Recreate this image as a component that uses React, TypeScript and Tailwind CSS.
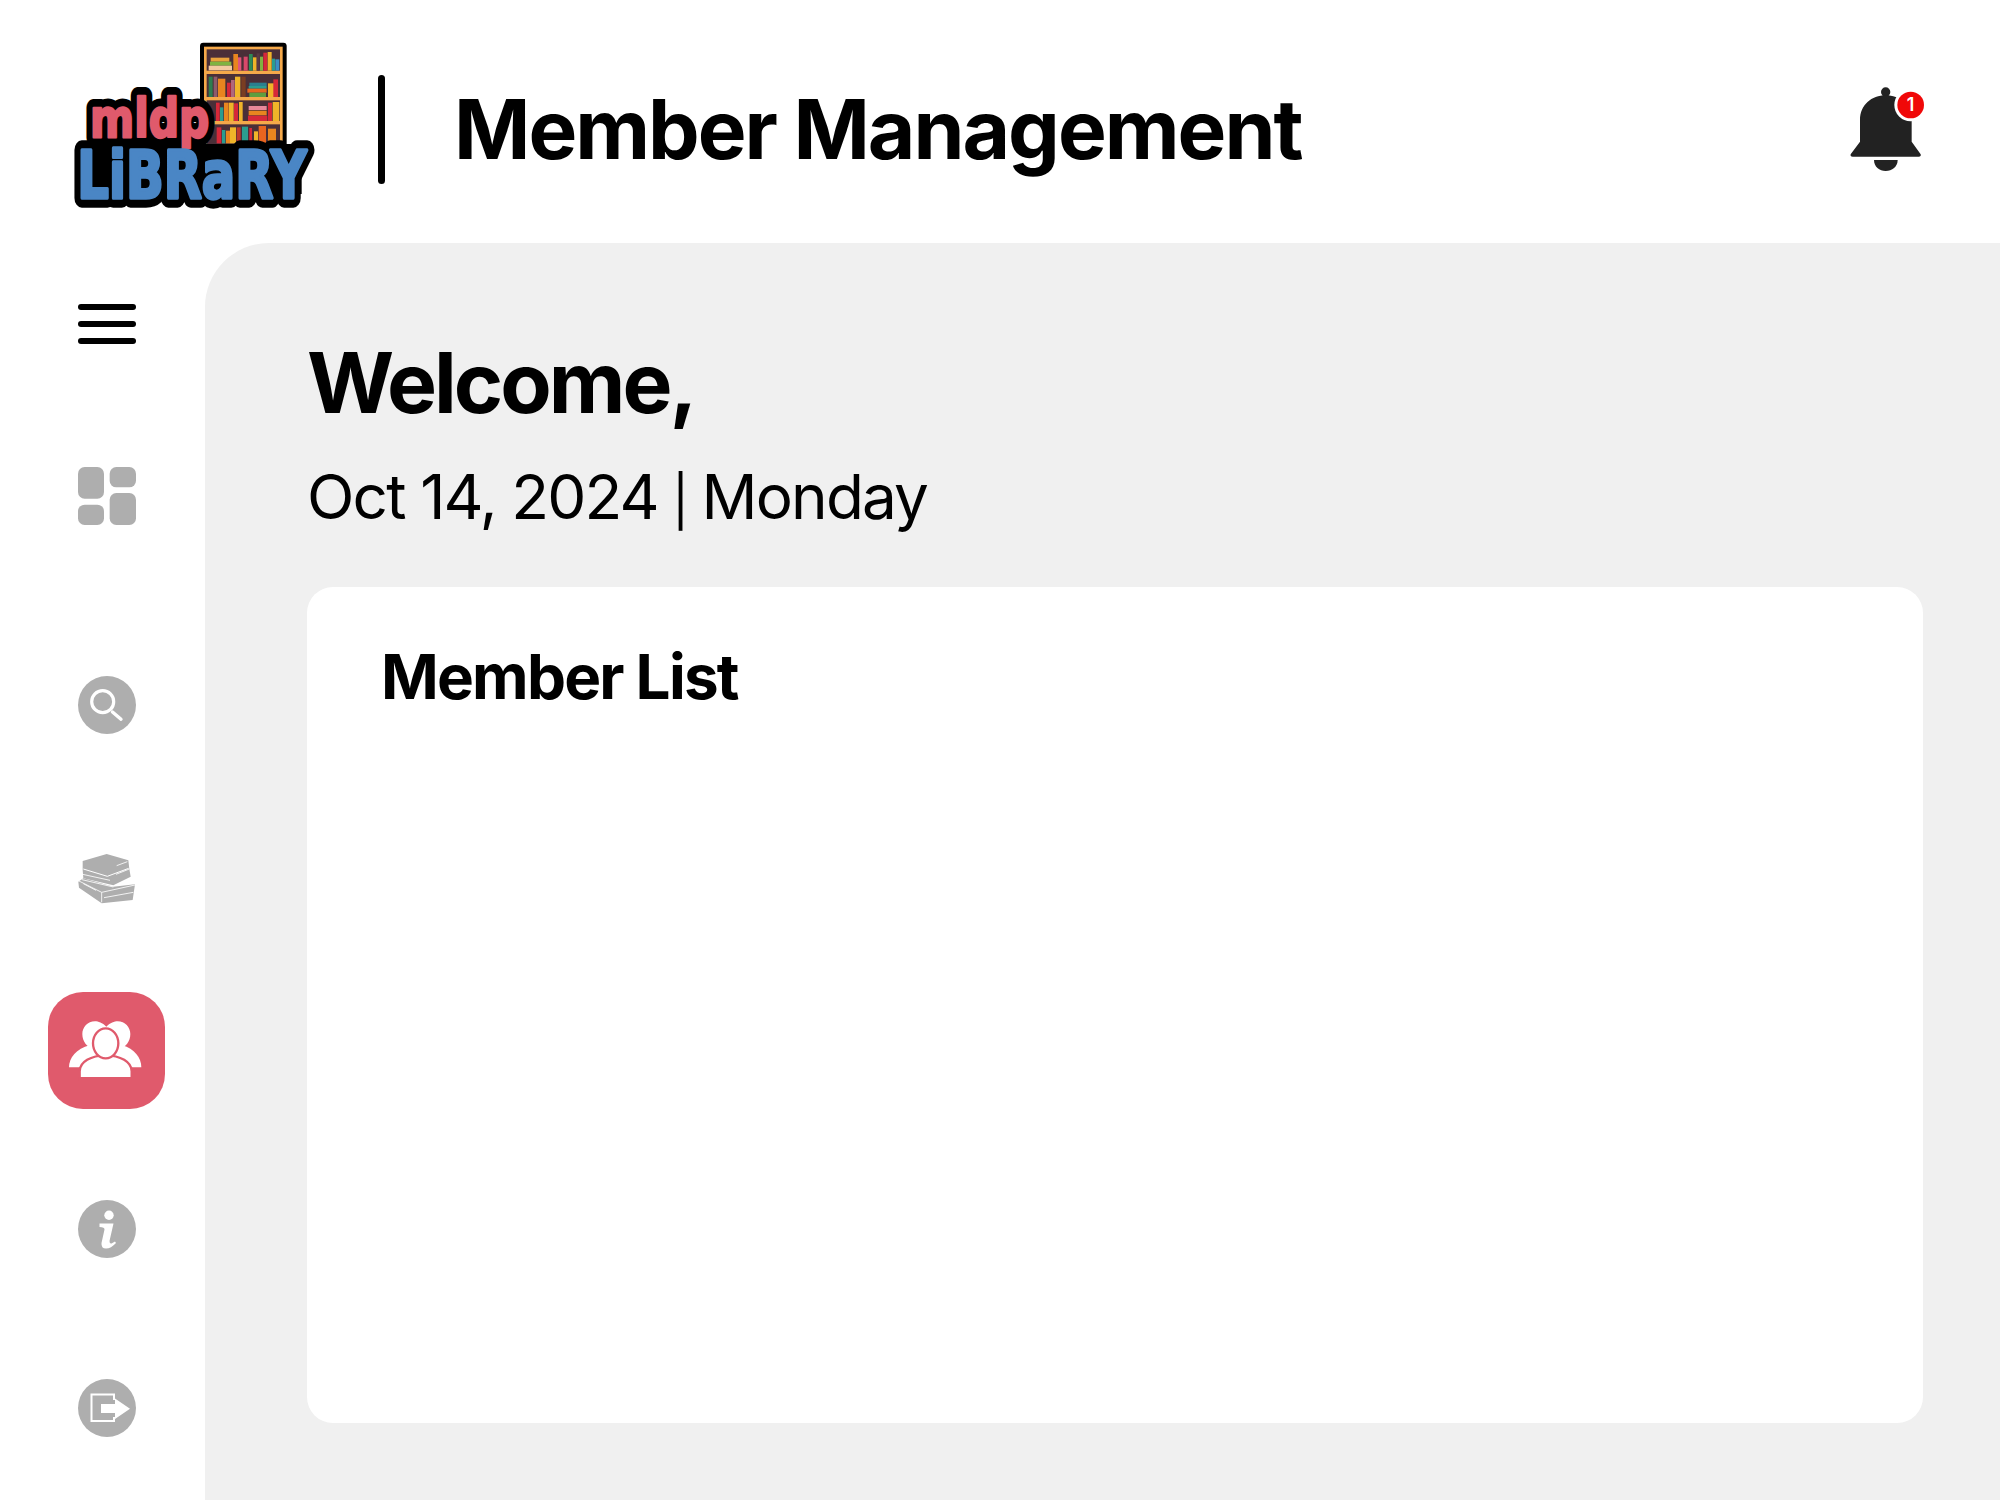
import { ReactNode } from "react";

const fontStack = { fontFamily: "Inter, 'Liberation Sans', sans-serif" };

// [x, y, w, h, colour] in the 3x crop of the logo
const shelfBooks: [number, number, number, number, string][] = [
  [512, 113, 56, 12, "#e8a33d"],
  [510, 125, 64, 12, "#7fb341"],
  [506, 137, 70, 14, "#f3c9a0"],
  [580, 102, 14, 50, "#e8851f"],
  [594, 112, 10, 40, "#e0567a"],
  [611, 110, 12, 42, "#d9486a"],
  [627, 102, 11, 50, "#2e8b57"],
  [639, 112, 11, 40, "#f0b429"],
  [650, 100, 9, 52, "#5a3a44"],
  [660, 110, 9, 42, "#7fb341"],
  [670, 98, 12, 54, "#d62839"],
  [683, 96, 12, 56, "#f0b429"],
  [696, 116, 9, 36, "#2a9d8f"],
  [706, 118, 12, 34, "#3a8fc4"],
  [506, 170, 12, 61, "#2e7d4f"],
  [521, 170, 11, 61, "#8e5a6b"],
  [534, 176, 22, 55, "#e8851f"],
  [561, 188, 11, 43, "#d62839"],
  [573, 180, 11, 51, "#b0677c"],
  [585, 170, 16, 61, "#f0b429"],
  [604, 170, 13, 61, "#7a3d22"],
  [628, 188, 52, 10, "#2a7f8f"],
  [626, 198, 54, 8, "#2a9d8f"],
  [622, 206, 58, 12, "#e8651f"],
  [628, 218, 50, 13, "#5f9e3f"],
  [684, 190, 24, 41, "#f0b429"],
  [700, 178, 14, 53, "#d62839"],
  [528, 248, 11, 55, "#d62839"],
  [540, 262, 10, 41, "#2a9d8f"],
  [552, 248, 14, 55, "#e8851f"],
  [567, 248, 14, 55, "#f0b429"],
  [582, 250, 12, 53, "#d62839"],
  [597, 246, 11, 57, "#f0b429"],
  [626, 258, 54, 12, "#e8889a"],
  [626, 272, 54, 14, "#e8851f"],
  [624, 287, 58, 16, "#d62839"],
  [684, 248, 12, 55, "#d62839"],
  [698, 246, 20, 57, "#f0b429"],
  [530, 322, 14, 48, "#d62839"],
  [546, 330, 10, 40, "#2a9d8f"],
  [558, 332, 12, 38, "#e8851f"],
  [570, 322, 18, 48, "#f0b429"],
  [590, 322, 12, 48, "#c0392b"],
  [606, 320, 18, 50, "#2a9d8f"],
  [628, 324, 8, 46, "#d62839"],
  [642, 334, 12, 36, "#f0b429"],
  [656, 318, 22, 52, "#e8651f"],
  [684, 326, 24, 44, "#e8851f"],
];

function Logo() {
  const mldp = {
    x: 150,
    y: 350,
    fontFamily: "'DejaVu Sans', sans-serif",
    fontWeight: 700,
    fontSize: 162,
    textLength: 358,
    lengthAdjust: "spacingAndGlyphs" as const,
    strokeLinejoin: "round" as const,
  };
  const library = {
    x: 112,
    y: 534,
    fontFamily: "'DejaVu Sans', sans-serif",
    fontWeight: 700,
    fontSize: 195,
    textLength: 688,
    lengthAdjust: "spacingAndGlyphs" as const,
    strokeLinejoin: "round" as const,
  };
  return (
    <svg width="300" height="200" viewBox="0 0 900 600" className="mt-[5px] shrink-0 self-start">
      <rect x="480" y="68" width="260" height="320" rx="10" fill="#000" />
      <rect x="496" y="84" width="228" height="300" fill="#4a2f38" stroke="#f5a94a" strokeWidth="8" />
      <rect x="496" y="152" width="228" height="10" fill="#f5a94a" />
      <rect x="496" y="231" width="228" height="10" fill="#f5a94a" />
      <rect x="496" y="303" width="228" height="10" fill="#f5a94a" />
      {shelfBooks.map(([x, y, w, h, c]) => (
        <rect key={`${x}-${y}`} x={x} y={y} width={w} height={h} fill={c} />
      ))}
      <rect x="125" y="372" width="660" height="150" fill="#000" />
      <text {...mldp} fill="#000" stroke="#000" strokeWidth="54">
        mldp
      </text>
      <text {...library} fill="#000" stroke="#000" strokeWidth="58">
        LiBRaRY
      </text>
      <text {...mldp} fill="#e05a6c" stroke="#e05a6c" strokeWidth="8">
        mldp
      </text>
      <text {...library} fill="#4a86c5" stroke="#4a86c5" strokeWidth="10">
        LiBRaRY
      </text>
    </svg>
  );
}

function Bell() {
  return (
    <svg width="120" height="110" viewBox="0 0 360 330" className="-mt-[8px]">
      <circle cx="197" cy="66" r="14" fill="#222" />
      <path d="M120 150C120 105 155 76 197 76C239 76 275 105 275 150V215L302 253Q304 260 296 260H98Q90 260 92 253L120 215Z" fill="#222" />
      <path d="M162 270H233C233 290 216 303 197 303C178 303 162 290 162 270Z" fill="#222" />
      <circle cx="272" cy="105" r="49" fill="#fff" />
      <circle cx="272" cy="105" r="40" fill="#f00808" />
      <text x="272" y="124" textAnchor="middle" fontFamily="Inter, sans-serif" fontWeight="600" fontSize="54" fill="#fff">
        1
      </text>
    </svg>
  );
}

function MenuIcon() {
  return (
    <div className="flex w-[58px] flex-col gap-[11px]">
      <span className="h-[6px] rounded-full bg-black" />
      <span className="h-[6px] rounded-full bg-black" />
      <span className="h-[6px] rounded-full bg-black" />
    </div>
  );
}

function DashboardIcon() {
  return (
    <svg width="58" height="58" viewBox="0 0 174 174" fill="#aeaeae">
      <rect x="0" y="0" width="78" height="95" rx="20" />
      <rect x="95" y="0" width="79" height="61" rx="20" />
      <rect x="0" y="113" width="78" height="61" rx="20" />
      <rect x="95" y="78" width="79" height="96" rx="20" />
    </svg>
  );
}

function SearchIcon() {
  return (
    <svg width="58" height="58" viewBox="0 0 58 58">
      <circle cx="29" cy="29" r="29" fill="#aeaeae" />
      <circle cx="24.7" cy="25.7" r="11" fill="none" stroke="#fff" strokeWidth="3.2" />
      <path d="M34.5 36L43 43.2" stroke="#fff" strokeWidth="3.4" strokeLinecap="round" />
    </svg>
  );
}

function BooksIcon() {
  return (
    <svg width="75" height="65" viewBox="0 0 225 195" fill="#aeaeae">
      <path d="M38 48L110 27L175 46L178 72L182 95L130 121L40 100L38 75Z" />
      <path d="M25 110L40 100L130 125L195 118L188 165L95 175L27 128Z" />
      <path d="M40 72L112 94L176 70" fill="none" stroke="#fff" strokeWidth="3" />
      <path d="M38 88L120 106M138 88L178 72M140 62L172 50" fill="none" stroke="#fff" strokeWidth="2.5" />
      <path d="M36 104L130 126" fill="none" stroke="#fff" strokeWidth="2.5" />
      <path d="M27 108L95 142L195 120M95 142V172M102 158L190 142M40 116L78 136" fill="none" stroke="#fff" strokeWidth="2.5" />
    </svg>
  );
}

function MembersIcon() {
  return (
    <svg width="95" height="85" viewBox="0 0 285 255">
      <path d="M142 56C130 44 118 40 108 40C86 40 70 58 70 78C70 100 84 118 104 124L180 124C200 118 214 100 214 78C214 58 198 40 176 40C166 40 154 44 142 56Z" fill="#fff" />
      <path d="M30 178C30 150 52 122 92 112L190 112C226 122 247 150 247 178Z" fill="#fff" />
      <path d="M62 212V190C62 162 96 142 140 142C184 142 218 162 218 190V212Z" fill="#fff" stroke="#e05a6c" strokeWidth="7" />
      <ellipse cx="140" cy="106" rx="38" ry="45" fill="#fff" stroke="#e05a6c" strokeWidth="7" />
      <rect x="58" y="207" width="164" height="12" fill="#e05a6c" />
    </svg>
  );
}

function InfoIcon() {
  return (
    <svg width="58" height="58" viewBox="0 0 58 58">
      <circle cx="29" cy="29" r="29" fill="#aeaeae" />
      <circle cx="31" cy="15.3" r="4.7" fill="#fff" />
      <path d="M21.5 23.5H35.5L31.5 41Q31.5 44 33.5 43.5L37 41.5L38 43Q33 48.5 28 48.5Q23 48.5 23.5 43L26.5 29.5Q26.8 27 21.5 27Z" fill="#fff" />
    </svg>
  );
}

function LogoutIcon() {
  return (
    <svg width="58" height="58" viewBox="0 0 58 58">
      <circle cx="29" cy="29" r="29" fill="#aeaeae" />
      <path d="M36 21V15.5H13.5V42H36V38" fill="none" stroke="#fff" strokeWidth="2" />
      <path d="M23 25H37V19.5L52 29.7L37 40V34H23Z" fill="#fff" />
    </svg>
  );
}

function NavItem({ children, className }: { children: ReactNode; className: string }) {
  return <div className={`flex items-center justify-center ${className}`}>{children}</div>;
}

export default function App() {
  return (
    <div className="flex h-[1500px] w-[2000px] flex-col overflow-hidden bg-white text-black" style={fontStack}>
      <header className="flex h-[243px] shrink-0 items-center pl-[40px] pr-[60px] pt-[15px]">
        <Logo />
        <div className="ml-[38px] h-[109px] w-[7px] rounded-full bg-black" />
        <h1 className="ml-[69px] flex-1 text-[82px] font-bold tracking-[-2px]">Member Management</h1>
        <Bell />
      </header>

      <div className="flex min-h-0 flex-1">
        <nav className="flex w-[205px] shrink-0 flex-col items-center pl-[9px] pt-[61px]">
          <NavItem className="h-[40px]">
            <MenuIcon />
          </NavItem>
          <NavItem className="mt-[123px]">
            <DashboardIcon />
          </NavItem>
          <NavItem className="mt-[151px]">
            <SearchIcon />
          </NavItem>
          <NavItem className="mt-[111px]">
            <BooksIcon />
          </NavItem>
          <NavItem className="-ml-[1px] mt-[82px] h-[117px] w-[117px] rounded-[35px] bg-[#e05a6c]">
            <MembersIcon />
          </NavItem>
          <NavItem className="mt-[91px]">
            <InfoIcon />
          </NavItem>
          <NavItem className="mt-[121px]">
            <LogoutIcon />
          </NavItem>
        </nav>

        <main className="flex flex-1 flex-col rounded-tl-[64px] bg-[#f0f0f0] pb-[77px] pl-[102px] pr-[77px] pt-[98px]">
          <h2 className="text-[84px] font-bold leading-none tracking-[-3px]">Welcome,</h2>
          <p className="mt-[41px] text-[62px] leading-none tracking-[-1.85px]">
            Oct 14, 2024 <span className="-mx-[1px] text-[50px]">|</span> Monday
          </p>
          <section className="mt-[59px] flex-1 rounded-[26px] bg-white pl-[74px] pt-[59px]">
            <h3 className="text-[62px] font-bold leading-none tracking-[-1.8px]">Member List</h3>
          </section>
        </main>
      </div>
    </div>
  );
}
